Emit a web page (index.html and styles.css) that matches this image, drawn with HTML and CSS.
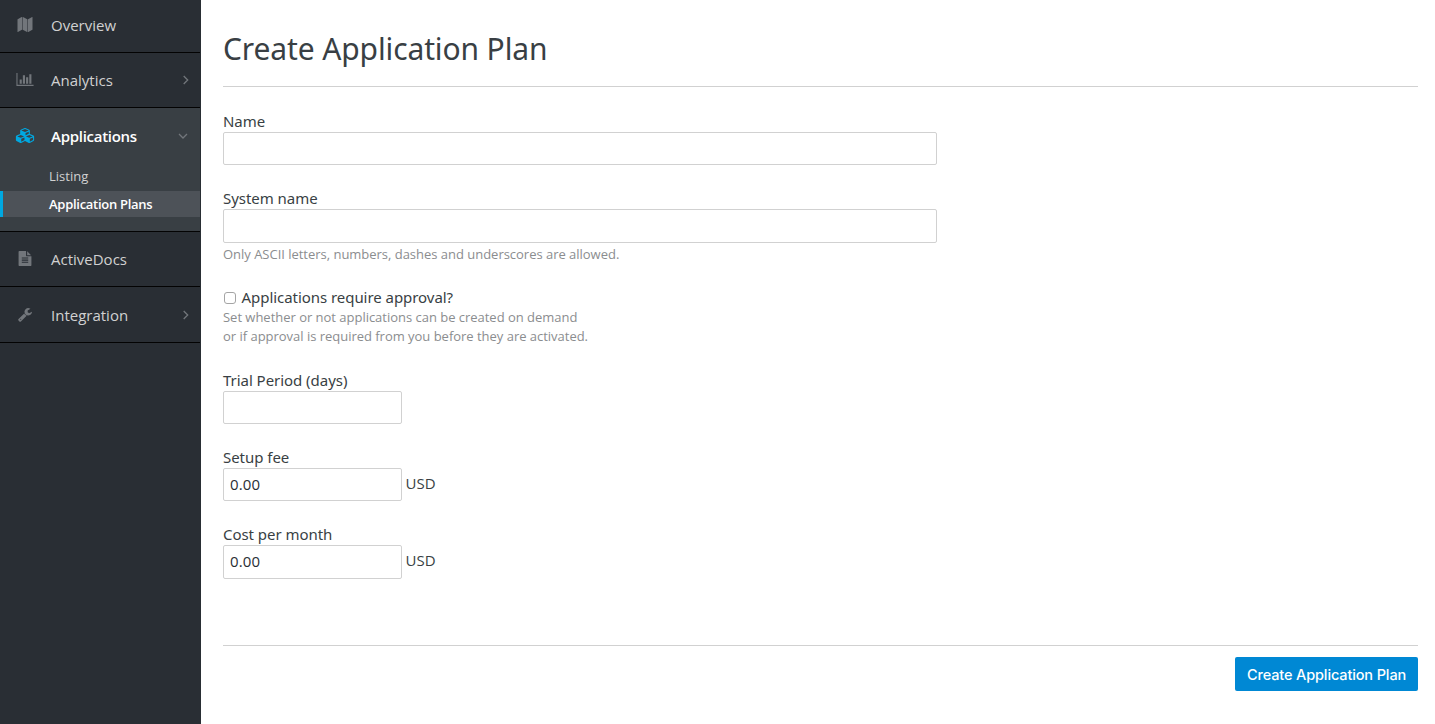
FILE: index.html
```html
<!DOCTYPE html>
<html lang="en">
<head>
<meta charset="utf-8">
<title>Create Application Plan</title>
<link rel="stylesheet" href="styles.css">
</head>
<body>
<div class="page">
  <nav class="sidebar">
    <a class="item item-first">
      <svg class="icon" viewBox="0 0 1792 1792"><path d="M512 0q32 0 32 32v1472q0 20-17 28l-480 256q-47 10-47-28V288q0-20 17-28L497 4q7-4 15-4zM1760 0q32 0 32 32v1472q0 20-17 28l-480 256q-47 10-47-28V288q0-20 17-28L1745 4q7-4 15-4zM640 0q8 0 14 3l512 256q18 10 18 29v1472q0 38-46 29l-512-256q-18-10-18-29V32q0-32 32-32z"/></svg>
      <span class="name">Overview</span>
    </a>
    <a class="item">
      <svg class="icon" viewBox="0 0 2048 1792"><path d="M640 896v512H384V896h256zm384-512v1024H768V384h256zm1024 1152v128H0V128h128v1408h1920zm-640-896v768h-256V640h256zm384-384v1152h-256V256h256z"/></svg>
      <span class="name">Analytics</span>
      <svg class="chevron" viewBox="0 0 8 10"><path d="m1.700 1 4 4-4 4"/></svg>
    </a>
    <div class="section">
      <a class="item item-open">
        <svg class="icon icon-active" viewBox="0 0 2176 1792"><path fill-rule="evenodd" d="M640 1632l384-192v-314l-384 164zM576 1178l404-173-404-173-404 173zM1664 1632l384-192v-314l-384 164zM1600 1178l404-173-404-173-404 173zM1152 865l384-165V434l-384 164zM1088 486l441-189-441-189-441 189zM2176 1024v416q0 36-19 67t-52 47l-448 224q-25 14-57 14t-57-14l-448-224q-5-2-7-4-2 2-7 4l-448 224q-25 14-57 14t-57-14L71 1554q-33-16-52-47t-19-67v-416q0-38 21.500-70T78 906l434-186V320q0-38 21.500-70T590 202l448-192q23-10 50-10t50 10l448 192q35 16 56.500 48t21.500 70v400l434 186q36 16 57 48t21 70z"/></svg>
        <span class="name">Applications</span>
        <svg class="chevron chevron-down" viewBox="0 0 10 8"><path d="m1 2 4 4 4-4"/></svg>
      </a>
      <a class="sub">Listing</a>
      <a class="sub sub-current">Application Plans</a>
    </div>
    <a class="item">
      <svg class="icon" viewBox="0 0 1792 1792"><path fill-rule="evenodd" d="M1596 476q14 14 28 36h-472V40q22 14 36 28zM1120 640h544v1056q0 40-28 68t-68 28H224q-40 0-68-28t-28-68V96q0-40 28-68t68-28h800v544q0 40 28 68t68 28zM512 768v128h768V768zM512 1024v128h768v-128zM512 1280v128h768v-128z"/></svg>
      <span class="name">ActiveDocs</span>
    </a>
    <a class="item item-last">
      <svg class="icon" viewBox="0 0 1792 1792"><path fill-rule="evenodd" d="M448 1472q0-26-19-45t-45-19-45 19-19 45 19 45 45 19 45-19 19-45zm644-420l-682 682q-37 37-90 37-52 0-91-37L123 1626q-38-36-38-90 0-53 38-91l681-681q39 98 114.500 173.500T1092 1052zm634-435q0 39-23 106-47 134-164.500 217.500T1280 1024q-185 0-316.500-131.500T832 576t131.500-316.500T1280 128q58 0 121.500 16.500T1509 191q16 11 16 28t-16 28l-293 169v224l193 107q5-3 79-48.500t135.500-81T1694 582q15 0 23.500 10t8.500 25z"/></svg>
      <span class="name">Integration</span>
      <svg class="chevron" viewBox="0 0 8 10"><path d="m1.700 1 4 4-4 4"/></svg>
    </a>
  </nav>
  <main class="main">
    <h1 class="title">Create Application Plan</h1>
    <form class="form">
      <div class="field">
        <label class="label" for="name">Name</label>
        <input class="input" id="name" type="text">
      </div>
      <div class="field field-system">
        <label class="label" for="system">System name</label>
        <input class="input input-tall" id="system" type="text">
        <p class="hint">Only ASCII letters, numbers, dashes and underscores are allowed.</p>
      </div>
      <div class="field field-approval">
        <label class="check"><input class="box" type="checkbox"><span class="check-text">Applications require approval?</span></label>
        <p class="hint">Set whether or not applications can be created on demand<br>or if approval is required from you before they are activated.</p>
      </div>
      <div class="field">
        <label class="label" for="trial">Trial Period (days)</label>
        <input class="input input-short" id="trial" type="text">
      </div>
      <div class="field">
        <label class="label" for="setup">Setup fee</label>
        <div class="money"><input class="input input-short" id="setup" type="text" value="0.00"><span class="unit">USD</span></div>
      </div>
      <div class="field field-cost">
        <label class="label" for="cost">Cost per month</label>
        <div class="money"><input class="input input-short input-tall" id="cost" type="text" value="0.00"><span class="unit">USD</span></div>
      </div>
      <div class="actions"><button class="submit" type="button">Create Application Plan</button></div>
    </form>
  </main>
</div>
</body>
</html>
```
FILE: styles.css
```css
* { box-sizing: border-box; }
body { margin: 0; background: #fff; color: #393f44; font-family: "Noto Sans", sans-serif; font-size: 15px; }
.page { display: flex; height: 724px; overflow: hidden; }
.sidebar { width: 201px; flex: none; background: #292e34; border-right: 1px solid #292e34; font-family: "Open Sans", sans-serif; }
.item { display: flex; align-items: center; height: 55px; padding: 0 10px 0 15px; border-bottom: 1px solid #030303; color: #d1d1d1; font-size: 15px; }
.item-first { height: 53px; padding-bottom: 3px; }
.item-last { height: 56px; }
.section { height: 124px; background: #393f44; border-bottom: 1px solid #030303; }
.item-open { height: 55px; border: 0; color: #fff; font-weight: 600; letter-spacing: -.28px; }
.icon { width: 20px; height: 15px; margin-bottom: 1px; flex: none; fill: #72767b; }
.icon-active { fill: #00a8e1; }
.name { flex: 1; padding-left: 16px; }
.chevron { width: 8px; height: 10px; fill: none; stroke: #72767b; stroke-width: 1.3; }
.chevron-down { width: 10px; height: 8px; margin-right: 2px; }
.sub { display: block; height: 28px; padding-left: 49px; line-height: 27px; font-size: 13px; color: #d1d1d1; }
.sub-current { height: 26px; padding-left: 46px; line-height: 26px; border-left: 3px solid #00a8e1; background: #4d5258; color: #fff; font-weight: 600; letter-spacing: -.28px; }
.main { flex: 1; padding: 0 17px 0 22px; }
.title { height: 87px; margin: 0; padding-top: 28px; border-bottom: 1px solid #d1d1d1; font-size: 30px; line-height: 42px; font-weight: 400; letter-spacing: -.12px; }
.form { padding-top: 25px; }
.field { height: 77px; }
.field-system { height: 99px; }
.field-approval { height: 83px; }
.field-cost { height: 120px; }
.label { display: block; height: 20px; line-height: 18px; letter-spacing: -.04px; }
.input { display: block; width: 714px; height: 33px; padding: 0 6px 2px; border: 1px solid #d1d1d1; border-radius: 2px; background: #fff; color: #292e34; font: 15px "Open Sans", sans-serif; letter-spacing: .1px; }
.input-tall { height: 34px; }
.input-short { width: 179px; }
.hint { margin: 0; color: #8b8d8f; font-family: "Open Sans", sans-serif; font-size: 13px; line-height: 19px; letter-spacing: -.02px; }
.field-system .hint { padding-top: 2px; }
.check { display: flex; align-items: center; height: 20px; }
.check-text { padding-bottom: 2px; letter-spacing: -.05px; }
.box { appearance: none; width: 12px; height: 12px; margin: 0 5.5px 0 1px; border: 1px solid #a5a5a5; border-radius: 3px; background: #fff; }
.money { display: flex; gap: 3.5px; }
.unit { line-height: 31px; font-family: "Open Sans", sans-serif; }
.actions { display: flex; justify-content: flex-end; padding-top: 11px; border-top: 1px solid #d1d1d1; }
.submit { width: 183px; height: 34px; padding: 0; border: 0; border-radius: 2px; background: #0088d4; color: #fff; font: 500 14.5px Inter, sans-serif; letter-spacing: -.13px; }
```
